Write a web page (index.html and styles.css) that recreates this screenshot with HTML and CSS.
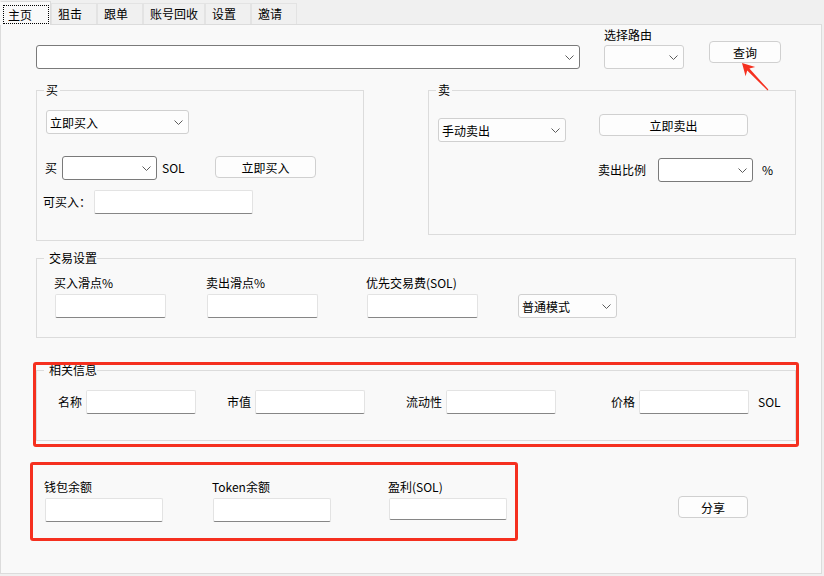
FILE: index.html
```html
<!DOCTYPE html>
<html lang="zh-CN">
<head>
  <meta charset="UTF-8">
  <title>主页</title>
  <link rel="stylesheet" href="styles.css">
</head>
<body>
  <!-- Tab strip -->
  <div class="tabs">
    <div class="tab active"><span class="focus">主页</span></div>
    <div class="tab">狙击</div>
    <div class="tab">跟单</div>
    <div class="tab">账号回收</div>
    <div class="tab">设置</div>
    <div class="tab">邀请</div>
  </div>

  <div class="page">
    <!-- Token address + route -->
    <div class="top-row">
      <div class="combo combo-edit combo-main"><span></span><svg class="chev" width="9" height="5" viewBox="0 0 9 5"><path d="M0.5 0.5 L4.5 4.5 L8.5 0.5"/></svg></div>
      <div class="route">
        <div class="route-label">选择路由</div>
        <div class="combo combo-route"><span></span><svg class="chev" width="9" height="5" viewBox="0 0 9 5"><path d="M0.5 0.5 L4.5 4.5 L8.5 0.5"/></svg></div>
      </div>
      <button class="btn btn-query">查询</button>
    </div>

    <svg class="arrow" width="40" height="38" viewBox="0 0 40 38">
      <polygon points="6,5 19.2,9 13.4,10.6 32.4,31.6 31.6,32.4 11.2,12.6 9.6,18.3"/>
    </svg>

    <!-- Buy / Sell -->
    <div class="groups-row">
      <fieldset class="group buy">
        <legend>买</legend>
        <div class="combo combo-buy-mode"><span>立即买入</span><svg class="chev" width="9" height="5" viewBox="0 0 9 5"><path d="M0.5 0.5 L4.5 4.5 L8.5 0.5"/></svg></div>
        <div class="buy-row">
          <span class="lbl lbl-buy">买</span>
          <div class="combo combo-edit combo-amount"><span></span><svg class="chev" width="9" height="5" viewBox="0 0 9 5"><path d="M0.5 0.5 L4.5 4.5 L8.5 0.5"/></svg></div>
          <span class="lbl unit">SOL</span>
          <button class="btn btn-buy">立即买入</button>
        </div>
        <div class="avail-row">
          <span class="lbl lbl-avail">可买入：</span>
          <input type="text" class="input-avail">
        </div>
      </fieldset>

      <fieldset class="group sell">
        <legend>卖</legend>
        <div class="sell-row">
          <div class="combo combo-sell-mode"><span>手动卖出</span><svg class="chev" width="9" height="5" viewBox="0 0 9 5"><path d="M0.5 0.5 L4.5 4.5 L8.5 0.5"/></svg></div>
          <button class="btn btn-sell">立即卖出</button>
        </div>
        <div class="ratio-row">
          <span class="lbl lbl-ratio">卖出比例</span>
          <div class="combo combo-edit combo-ratio"><span></span><svg class="chev" width="9" height="5" viewBox="0 0 9 5"><path d="M0.5 0.5 L4.5 4.5 L8.5 0.5"/></svg></div>
          <span class="lbl pct">%</span>
        </div>
      </fieldset>
    </div>

    <!-- Trade settings -->
    <fieldset class="group trade">
      <legend>交易设置</legend>
      <div class="trade-row">
        <div class="field">
          <label>买入滑点%</label>
          <input type="text">
        </div>
        <div class="field">
          <label>卖出滑点%</label>
          <input type="text">
        </div>
        <div class="field">
          <label>优先交易费(SOL)</label>
          <input type="text">
        </div>
        <div class="field">
          <label></label>
          <div class="combo combo-fee-mode"><span>普通模式</span><svg class="chev" width="9" height="5" viewBox="0 0 9 5"><path d="M0.5 0.5 L4.5 4.5 L8.5 0.5"/></svg></div>
        </div>
      </div>
    </fieldset>

    <!-- Token info (highlighted) -->
    <div class="marked">
      <fieldset class="group info">
        <legend>相关信息</legend>
        <div class="info-row">
          <div class="pair"><span class="lbl">名称</span><input type="text"></div>
          <div class="pair"><span class="lbl">市值</span><input type="text"></div>
          <div class="pair"><span class="lbl">流动性</span><input type="text"></div>
          <div class="pair"><span class="lbl">价格</span><input type="text"></div>
          <span class="lbl info-unit">SOL</span>
        </div>
      </fieldset>
    </div>

    <!-- Balances -->
    <div class="balance-row">
      <div class="red-box">
        <div class="field">
          <label>钱包余额</label>
          <input type="text" class="input-balance">
        </div>
        <div class="field">
          <label>Token余额</label>
          <input type="text" class="input-balance">
        </div>
        <div class="field">
          <label>盈利(SOL)</label>
          <input type="text" class="input-balance input-profit">
        </div>
      </div>
      <button class="btn btn-share">分享</button>
    </div>
  </div>
</body>
</html>
```

FILE: styles.css
```css
/* General */
* {
  box-sizing: border-box;
}

body {
  margin: 0;
  width: 824px;
  height: 576px;
  overflow: hidden;
  background-color: #f0f0f0;
  color: #000;
  font-family: "Noto Sans CJK SC", "Noto Sans", sans-serif;
  font-size: 12px;
}

/* Tabs */
.tabs {
  display: flex;
  align-items: flex-end;
  height: 24px;
}

.tab {
  height: 21px;
  min-width: 46px;
  padding: 0 6px;
  line-height: 20px;
  background-color: #f0f0f0;
  border: 1px solid #e3e3e3;
  border-bottom: none;
}

.tab.active {
  position: relative;
  z-index: 1;
  width: 51px;
  height: 24px;
  margin-bottom: -1px;
  padding: 3px 1px 0 2px;
  background-color: #f9f9f9;
  border-color: #dcdcdc;
  border-left-color: #f9f9f9;
}

.focus {
  display: block;
  height: 19px;
  padding-left: 4px;
  line-height: 17px;
  border: 1px dotted #000;
}

/* Page */
.page {
  position: relative;
  height: 550px;
  margin-right: 2px;
  padding: 2px 0 0 35px;
  background-color: #f9f9f9;
  border: 1px solid #dcdcdc;
}

/* Controls */
.combo {
  display: flex;
  align-items: center;
  height: 24px;
  padding-left: 3px;
  background-color: #fdfdfd;
  border: 1px solid #d0d0d0;
  border-radius: 3px;
}

.combo-edit {
  background-color: #fff;
  border-color: #7a7a7a;
}

.chev {
  margin-left: auto;
  margin-right: 5px;
}

.chev path {
  fill: none;
  stroke: #5c5c5c;
  stroke-width: 1;
}

input[type="text"] {
  height: 24px;
  padding: 0 4px;
  font: inherit;
  background-color: #fff;
  border: 1px solid #e3e3e3;
  border-bottom-color: #868686;
  border-radius: 2px;
  outline: none;
}

.btn {
  height: 22px;
  padding: 0;
  font: inherit;
  color: #000;
  background-color: #fdfdfd;
  border: 1px solid #d0d0d0;
  border-radius: 4px;
}

.lbl {
  line-height: 24px;
  white-space: nowrap;
}

/* Group boxes */
.group {
  margin: 0;
  padding: 0;
  min-width: 0;
  border: 1px solid #dcdcdc;
}

.group legend {
  margin-left: 7px;
  padding: 0 2px;
  line-height: 14px;
}

/* Top row */
.top-row {
  display: flex;
  align-items: flex-start;
}

.combo-main {
  width: 544px;
  margin-top: 18px;
}

.route {
  margin-left: 24px;
}

.route-label {
  height: 18px;
  line-height: 16px;
}

.combo-route {
  width: 80px;
}

.btn-query {
  width: 72px;
  margin: 14px 0 0 25px;
}

.arrow {
  position: absolute;
  left: 735px;
  top: 33px;
}

.arrow polygon {
  fill: #f5301f;
}

/* Buy / Sell */
.groups-row {
  display: flex;
  align-items: flex-start;
  margin-top: 14px;
}

.buy {
  width: 328px;
  height: 158px;
}

.combo-buy-mode {
  width: 143px;
  margin: 13px 0 0 9px;
}

.buy-row {
  display: flex;
  align-items: flex-start;
  margin: 22px 0 0 8px;
}

.lbl-buy {
  width: 17px;
}

.combo-amount {
  width: 95px;
}

.unit {
  width: 58px;
  padding-left: 5px;
}

.btn-buy {
  width: 101px;
}

.avail-row {
  display: flex;
  margin: 10px 0 0 6px;
}

.lbl-avail {
  width: 51px;
}

.input-avail {
  width: 159px;
}

.sell {
  width: 368px;
  height: 152px;
  margin-left: 64px;
}

.sell-row {
  display: flex;
  align-items: flex-start;
  margin: 17px 0 0 9px;
}

.combo-sell-mode {
  width: 128px;
  margin-top: 4px;
}

.btn-sell {
  width: 149px;
  margin-left: 33px;
}

.ratio-row {
  display: flex;
  margin: 16px 0 0 169px;
}

.lbl-ratio {
  width: 60px;
}

.combo-ratio {
  width: 95px;
}

.pct {
  margin-left: 9px;
}

/* Trade settings */
.trade {
  width: 760px;
  height: 87px;
  margin-top: 10px;
}

.trade legend,
.info legend {
  padding: 0 0 0 5px;
}

.trade-row {
  display: flex;
  margin: 10px 0 0 17px;
}

.field {
  display: flex;
  flex-direction: column;
}

.field label {
  height: 16px;
  margin-bottom: 3px;
  line-height: 16px;
  white-space: nowrap;
}

.field input {
  width: 111px;
  margin-left: 1px;
}

.trade-row .field:nth-child(1) { width: 152px; }
.trade-row .field:nth-child(2) { width: 160px; }
.trade-row .field:nth-child(3) { width: 152px; }

.combo-fee-mode {
  width: 99px;
}

/* Token info */
.marked {
  position: relative;
  width: 760px;
  margin-top: 25px;
}

.marked::after {
  content: "";
  position: absolute;
  top: -1px;
  left: -3px;
  right: -3px;
  bottom: -6px;
  border: 3px solid #f5301f;
  border-radius: 3px;
}

.info {
  width: 760px;
  height: 78px;
}

.info-row {
  display: flex;
  align-items: center;
  margin: 13px 0 0 21px;
}

.pair {
  display: flex;
  align-items: center;
  gap: 4px;
}

.pair input {
  width: 110px;
}

.pair:nth-child(1) { width: 169px; }
.pair:nth-child(2) { width: 179px; }
.pair:nth-child(3) { width: 205px; }

.info-unit {
  margin-left: 9px;
}

/* Balances */
.balance-row {
  display: flex;
  align-items: flex-start;
  margin: 21px 0 0 -6px;
}

.red-box {
  display: flex;
  width: 488px;
  height: 79px;
  padding: 14px 0 0 11px;
  border: 3px solid #f5301f;
  border-radius: 3px;
}

.red-box .field:nth-child(1) { width: 168px; }
.red-box .field:nth-child(2) { width: 176px; }

.red-box .input-balance {
  width: 118px;
}

.red-box .input-profit {
  height: 22px;
}

.btn-share {
  width: 70px;
  margin: 34px 0 0 160px;
}
```
